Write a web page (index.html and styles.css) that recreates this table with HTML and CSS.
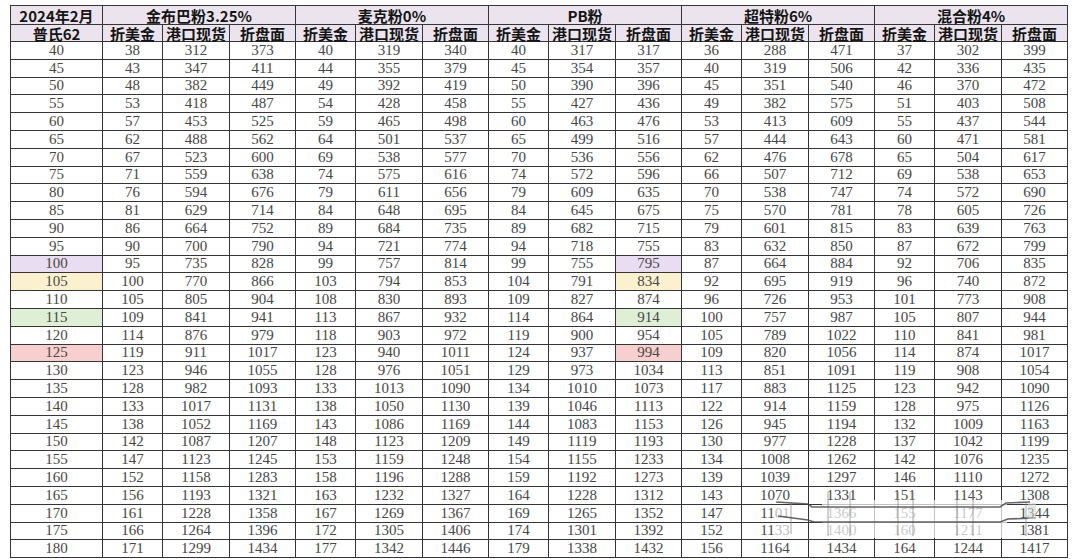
FILE: index.html
```html
<!DOCTYPE html>
<html lang="zh">
<head>
<meta charset="utf-8">
<title>铁矿粉折算表</title>
<link rel="stylesheet" href="styles.css">
</head>
<body>
<div class="sheet">
<table class="grid">
<colgroup>
<col class="c-base">
<col class="c-a"><col class="c-b"><col class="c-c">
<col class="c-a"><col class="c-b"><col class="c-c">
<col class="c-a"><col class="c-b"><col class="c-c">
<col class="c-a"><col class="c-b"><col class="c-c">
<col class="c-a"><col class="c-b"><col class="c-c">
</colgroup>
<thead>
<tr class="h1">
<th>2024年2月</th>
<th colspan="3">金布巴粉3.25%</th>
<th colspan="3">麦克粉0%</th>
<th colspan="3">PB粉</th>
<th colspan="3">超特粉6%</th>
<th colspan="3">混合粉4%</th>
</tr>
<tr class="h2">
<th>普氏62</th>
<th>折美金</th><th>港口现货</th><th>折盘面</th>
<th>折美金</th><th>港口现货</th><th>折盘面</th>
<th>折美金</th><th>港口现货</th><th>折盘面</th>
<th>折美金</th><th>港口现货</th><th>折盘面</th>
<th>折美金</th><th>港口现货</th><th>折盘面</th>
</tr>
</thead>
<tbody>
<tr><td>40</td><td>38</td><td>312</td><td>373</td><td>40</td><td>319</td><td>340</td><td>40</td><td>317</td><td>317</td><td>36</td><td>288</td><td>471</td><td>37</td><td>302</td><td>399</td></tr>
<tr><td>45</td><td>43</td><td>347</td><td>411</td><td>44</td><td>355</td><td>379</td><td>45</td><td>354</td><td>357</td><td>40</td><td>319</td><td>506</td><td>42</td><td>336</td><td>435</td></tr>
<tr><td>50</td><td>48</td><td>382</td><td>449</td><td>49</td><td>392</td><td>419</td><td>50</td><td>390</td><td>396</td><td>45</td><td>351</td><td>540</td><td>46</td><td>370</td><td>472</td></tr>
<tr><td>55</td><td>53</td><td>418</td><td>487</td><td>54</td><td>428</td><td>458</td><td>55</td><td>427</td><td>436</td><td>49</td><td>382</td><td>575</td><td>51</td><td>403</td><td>508</td></tr>
<tr><td>60</td><td>57</td><td>453</td><td>525</td><td>59</td><td>465</td><td>498</td><td>60</td><td>463</td><td>476</td><td>53</td><td>413</td><td>609</td><td>55</td><td>437</td><td>544</td></tr>
<tr><td>65</td><td>62</td><td>488</td><td>562</td><td>64</td><td>501</td><td>537</td><td>65</td><td>499</td><td>516</td><td>57</td><td>444</td><td>643</td><td>60</td><td>471</td><td>581</td></tr>
<tr><td>70</td><td>67</td><td>523</td><td>600</td><td>69</td><td>538</td><td>577</td><td>70</td><td>536</td><td>556</td><td>62</td><td>476</td><td>678</td><td>65</td><td>504</td><td>617</td></tr>
<tr><td>75</td><td>71</td><td>559</td><td>638</td><td>74</td><td>575</td><td>616</td><td>74</td><td>572</td><td>596</td><td>66</td><td>507</td><td>712</td><td>69</td><td>538</td><td>653</td></tr>
<tr><td>80</td><td>76</td><td>594</td><td>676</td><td>79</td><td>611</td><td>656</td><td>79</td><td>609</td><td>635</td><td>70</td><td>538</td><td>747</td><td>74</td><td>572</td><td>690</td></tr>
<tr><td>85</td><td>81</td><td>629</td><td>714</td><td>84</td><td>648</td><td>695</td><td>84</td><td>645</td><td>675</td><td>75</td><td>570</td><td>781</td><td>78</td><td>605</td><td>726</td></tr>
<tr><td>90</td><td>86</td><td>664</td><td>752</td><td>89</td><td>684</td><td>735</td><td>89</td><td>682</td><td>715</td><td>79</td><td>601</td><td>815</td><td>83</td><td>639</td><td>763</td></tr>
<tr><td>95</td><td>90</td><td>700</td><td>790</td><td>94</td><td>721</td><td>774</td><td>94</td><td>718</td><td>755</td><td>83</td><td>632</td><td>850</td><td>87</td><td>672</td><td>799</td></tr>
<tr><td class="hl-purple">100</td><td>95</td><td>735</td><td>828</td><td>99</td><td>757</td><td>814</td><td>99</td><td>755</td><td class="hl-purple">795</td><td>87</td><td>664</td><td>884</td><td>92</td><td>706</td><td>835</td></tr>
<tr><td class="hl-yellow">105</td><td>100</td><td>770</td><td>866</td><td>103</td><td>794</td><td>853</td><td>104</td><td>791</td><td class="hl-yellow">834</td><td>92</td><td>695</td><td>919</td><td>96</td><td>740</td><td>872</td></tr>
<tr><td>110</td><td>105</td><td>805</td><td>904</td><td>108</td><td>830</td><td>893</td><td>109</td><td>827</td><td>874</td><td>96</td><td>726</td><td>953</td><td>101</td><td>773</td><td>908</td></tr>
<tr><td class="hl-green">115</td><td>109</td><td>841</td><td>941</td><td>113</td><td>867</td><td>932</td><td>114</td><td>864</td><td class="hl-green">914</td><td>100</td><td>757</td><td>987</td><td>105</td><td>807</td><td>944</td></tr>
<tr><td>120</td><td>114</td><td>876</td><td>979</td><td>118</td><td>903</td><td>972</td><td>119</td><td>900</td><td>954</td><td>105</td><td>789</td><td>1022</td><td>110</td><td>841</td><td>981</td></tr>
<tr><td class="hl-red">125</td><td>119</td><td>911</td><td>1017</td><td>123</td><td>940</td><td>1011</td><td>124</td><td>937</td><td class="hl-red">994</td><td>109</td><td>820</td><td>1056</td><td>114</td><td>874</td><td>1017</td></tr>
<tr><td>130</td><td>123</td><td>946</td><td>1055</td><td>128</td><td>976</td><td>1051</td><td>129</td><td>973</td><td>1034</td><td>113</td><td>851</td><td>1091</td><td>119</td><td>908</td><td>1054</td></tr>
<tr><td>135</td><td>128</td><td>982</td><td>1093</td><td>133</td><td>1013</td><td>1090</td><td>134</td><td>1010</td><td>1073</td><td>117</td><td>883</td><td>1125</td><td>123</td><td>942</td><td>1090</td></tr>
<tr><td>140</td><td>133</td><td>1017</td><td>1131</td><td>138</td><td>1050</td><td>1130</td><td>139</td><td>1046</td><td>1113</td><td>122</td><td>914</td><td>1159</td><td>128</td><td>975</td><td>1126</td></tr>
<tr><td>145</td><td>138</td><td>1052</td><td>1169</td><td>143</td><td>1086</td><td>1169</td><td>144</td><td>1083</td><td>1153</td><td>126</td><td>945</td><td>1194</td><td>132</td><td>1009</td><td>1163</td></tr>
<tr><td>150</td><td>142</td><td>1087</td><td>1207</td><td>148</td><td>1123</td><td>1209</td><td>149</td><td>1119</td><td>1193</td><td>130</td><td>977</td><td>1228</td><td>137</td><td>1042</td><td>1199</td></tr>
<tr><td>155</td><td>147</td><td>1123</td><td>1245</td><td>153</td><td>1159</td><td>1248</td><td>154</td><td>1155</td><td>1233</td><td>134</td><td>1008</td><td>1262</td><td>142</td><td>1076</td><td>1235</td></tr>
<tr><td>160</td><td>152</td><td>1158</td><td>1283</td><td>158</td><td>1196</td><td>1288</td><td>159</td><td>1192</td><td>1273</td><td>139</td><td>1039</td><td>1297</td><td>146</td><td>1110</td><td>1272</td></tr>
<tr><td>165</td><td>156</td><td>1193</td><td>1321</td><td>163</td><td>1232</td><td>1327</td><td>164</td><td>1228</td><td>1312</td><td>143</td><td>1070</td><td>1331</td><td>151</td><td>1143</td><td>1308</td></tr>
<tr><td>170</td><td>161</td><td>1228</td><td>1358</td><td>167</td><td>1269</td><td>1367</td><td>169</td><td>1265</td><td>1352</td><td>147</td><td class="faded-l">11<span class="ghost">01</span></td><td class="ghost">1366</td><td class="ghost">155</td><td class="ghost">1177</td><td class="faded">1344</td></tr>
<tr><td>175</td><td>166</td><td>1264</td><td>1396</td><td>172</td><td>1305</td><td>1406</td><td>174</td><td>1301</td><td>1392</td><td>152</td><td class="faded-l">11<span class="ghost">33</span></td><td class="ghost">1400</td><td class="ghost">160</td><td class="ghost">1211</td><td class="faded">1381</td></tr>
<tr><td>180</td><td>171</td><td>1299</td><td>1434</td><td>177</td><td>1342</td><td>1446</td><td>179</td><td>1338</td><td>1432</td><td>156</td><td>1164</td><td>1434</td><td>164</td><td>1244</td><td>1417</td></tr>
</tbody>
</table>
<svg class="scribble" width="1080" height="559" viewBox="0 0 1080 559" aria-hidden="true">
<rect x="822" y="500" width="185" height="38" fill="#ffffff" opacity="0.7"/>
<g stroke="#8a8a8a" stroke-width="1" fill="none" opacity="0.75">
<line x1="828" y1="492" x2="828" y2="536"/>
<line x1="850" y1="492" x2="850" y2="536"/>
<line x1="898" y1="492" x2="898" y2="536"/>
<line x1="913" y1="492" x2="913" y2="536"/>
<line x1="957" y1="492" x2="957" y2="536"/>
<line x1="973" y1="492" x2="973" y2="536"/>
<line x1="791" y1="502" x2="791" y2="534"/>
<line x1="1026" y1="503" x2="1026" y2="536"/>
</g>
<g stroke="#4a4a4a" stroke-width="1.6" fill="none" opacity="0.85">
<path d="M776 502 L808 504 L812 507 L1000 507 L1006 503 L1030 502"/>
<path d="M778 516 L808 520 L814 522 L1000 522 L1008 519 L1036 518"/>
</g>
<rect x="1028" y="503" width="8" height="16" fill="#d6d6d6" opacity="0.6"/>
</svg>
</div>
</body>
</html>
```

FILE: styles.css
```css
html, body {
  margin: 0;
  padding: 0;
  background: #ffffff;
}

.sheet {
  position: relative;
  width: 1080px;
  height: 559px;
  padding: 5px 0 0 10px;
  box-sizing: border-box;
  overflow: hidden;
}

.grid {
  border-collapse: collapse;
  table-layout: fixed;
  width: 1057px;
}

.c-base { width: 92px; }
.c-a { width: 60px; }
.c-b { width: 67px; }
.c-c { width: 66px; }

.grid th,
.grid td {
  border: 1px solid #353535;
  padding: 0;
  text-align: center;
  vertical-align: middle;
  white-space: nowrap;
}

.grid th {
  background: #ebe4ee;
  color: #151515;
  font-family: "Noto Sans CJK SC", "Noto Sans", sans-serif;
  font-weight: 700;
  font-size: 15px;
  line-height: 15px;
}

.h1 th { height: 18px; }
.h2 th { height: 16px; }

.grid td {
  height: 16.8px;
  color: #474747;
  font-family: "Liberation Serif", "DejaVu Serif", serif;
  font-size: 15px;
  line-height: 15px;
}

.hl-purple { background: #e8ddf1; }
.hl-yellow { background: #fcf1cf; }
.hl-green { background: #deefd6; }
.hl-red { background: #f8cfcf; }

.ghost { color: #bdbdbd; }
.faded { color: #8f8f8f; }
.faded-l { color: #6a6a6a; }

.scribble {
  position: absolute;
  left: 0;
  top: 0;
  pointer-events: none;
}
```
